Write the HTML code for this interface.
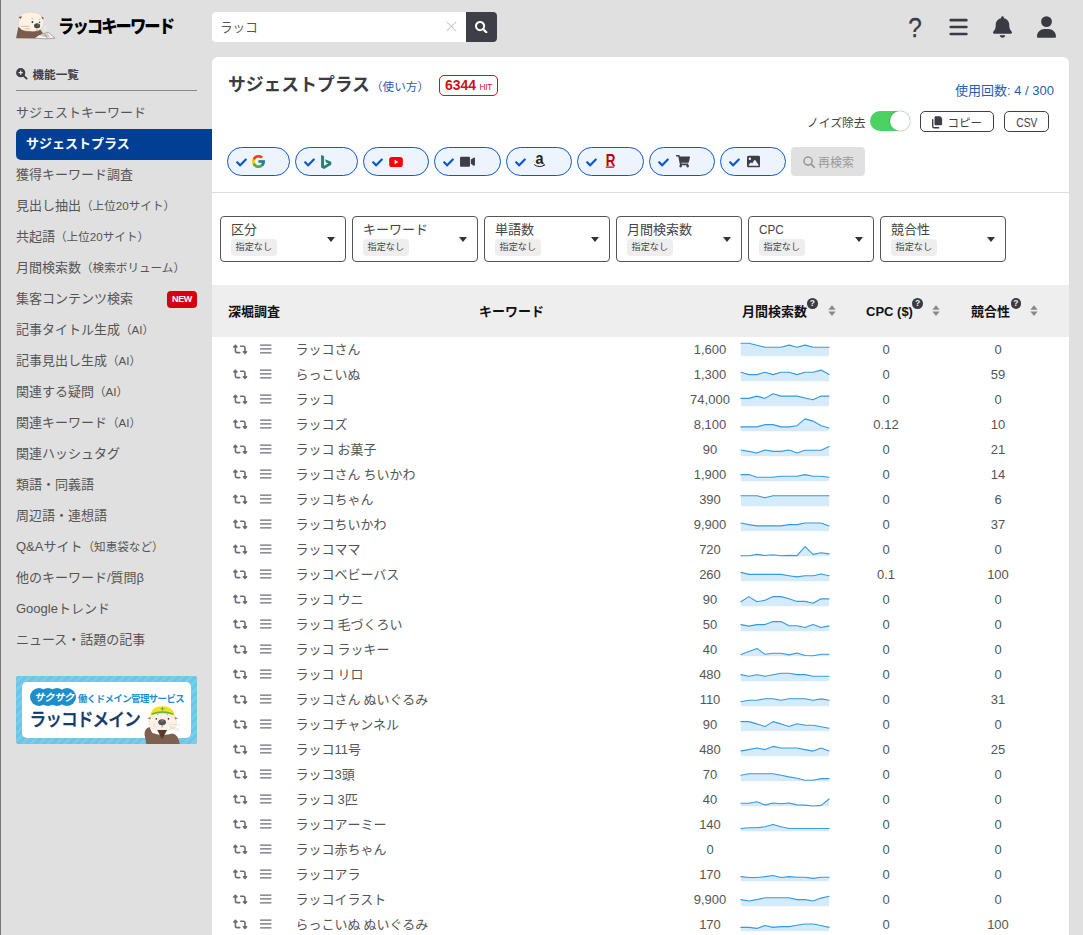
<!DOCTYPE html>
<html lang="ja">
<head>
<meta charset="utf-8">
<title>ラッコキーワード</title>
<style>
*{box-sizing:border-box;}
html,body{margin:0;padding:0;}
body{width:1083px;height:935px;overflow:hidden;background:#e0e0e0;position:relative;
 font-family:"Liberation Sans","Noto Sans CJK JP",sans-serif;font-size:13px;color:#555;}
.lb{position:absolute;left:0;top:0;width:1px;height:935px;background:#777;}
svg{display:block;}
.abs{position:absolute;}
/* header */
.logo-txt{position:absolute;left:58px;top:12px;font-size:16.3px;font-weight:900;color:#000;white-space:nowrap;letter-spacing:-1.9px;line-height:28px;transform-origin:left center;transform:scaleY(1.1);}
.search{position:absolute;left:212px;top:12px;width:285px;height:30px;background:#fff;border-radius:4px;overflow:hidden;}
.search .q{position:absolute;left:8px;top:1.300px;line-height:30px;font-size:12.600px;color:#555;}
.search .x{position:absolute;left:234px;top:9px;}
.search .btn{position:absolute;right:0;top:0;width:31px;height:30px;background:#3e3e47;}
.search .btn svg{position:absolute;left:9px;top:8.700px;}
.hq{left:903px;top:11.700px;width:24px;height:32px;line-height:32px;text-align:center;font-size:27.400px;color:#3a3a42;font-weight:normal;-webkit-text-stroke:.3px #3a3a42;transform:scaleX(.89);}
/* sidebar */
.sb-h{position:absolute;left:16px;top:64px;width:181px;height:27px;border-bottom:1px solid #888;font-size:11.600px;font-weight:bold;color:#3e3e47;line-height:23px;}
.sb-h svg{position:absolute;left:0;top:3.800px;}
.sb-h span{position:absolute;left:16.500px;top:-1.300px;}
.menu{position:absolute;left:16px;top:98px;width:196px;margin:0;padding:0;list-style:none;}
.menu li{height:31px;line-height:30px;font-size:13px;color:#555;white-space:nowrap;position:relative;}
.menu li small{font-size:11.600px;}
.menu li.on{background:#003f94;color:#fff;font-weight:bold;border-radius:5px 0 0 5px;padding-left:10px;}
.new{position:absolute;left:151px;top:7px;width:30px;height:17px;background:#d7000f;border-radius:4px;color:#fff;font-size:9px;font-weight:bold;line-height:17px;text-align:center;letter-spacing:-.3px;}
/* banner */
.bn{position:absolute;left:16px;top:676px;width:181px;height:68px;border-radius:2px;overflow:hidden;
 background:repeating-linear-gradient(135deg,#6cc4e6 0,#6cc4e6 3px,#7ccbe9 3px,#7ccbe9 6px);}
.bn .in{position:absolute;left:6px;top:6px;width:169px;height:56px;background:#fff;border-radius:5px;}
.bn .t1{position:absolute;left:62px;top:17px;font-size:9.400px;font-weight:bold;color:#1b8fd0;letter-spacing:-0.53px;white-space:nowrap;line-height:12px;}
.bn .t2{position:absolute;left:13.500px;top:32.800px;font-size:16.800px;font-weight:500;-webkit-text-stroke:.35px #123a6a;color:#123a6a;white-space:nowrap;line-height:24px;letter-spacing:-1.05px;transform:scaleY(1.1);transform-origin:center;}
.bn .sk{position:absolute;left:15px;top:11px;width:46px;height:19px;}
.bn .sk i{position:absolute;top:.6px;width:18.300px;height:18.300px;border-radius:50%;background:#1e8ec8;}
.bn .sk b{position:absolute;left:3px;top:2.600px;font-size:10.300px;line-height:15px;color:#fff;font-style:italic;font-weight:bold;letter-spacing:-0.35px;white-space:nowrap;}
/* panel */
.panel{position:absolute;left:212px;top:57px;width:857px;height:900px;background:#fff;border-radius:6px 6px 0 0;}
.ttl{position:absolute;left:16px;top:14px;font-size:17.8px;font-weight:bold;color:#3b3b44;line-height:28px;white-space:nowrap;}
.how{position:absolute;left:159px;top:21px;font-size:11.600px;color:#2f5cb0;line-height:18px;white-space:nowrap;}
.hit{position:absolute;left:227px;top:18px;width:59px;height:21px;border:1px solid #d0121b;border-radius:5px;color:#d0121b;text-align:center;line-height:19px;font-size:14px;font-weight:bold;white-space:nowrap;}
.hit small{font-size:8.300px;font-weight:normal;margin-left:3.500px;letter-spacing:-.3px;}
.use{position:absolute;right:15px;top:25px;font-size:13px;color:#2a5db0;line-height:18px;white-space:nowrap;}
.noise{position:absolute;left:595px;top:56.600px;font-size:11.800px;color:#444;line-height:18px;white-space:nowrap;}
.tg{position:absolute;left:658px;top:54px;width:40px;height:20px;border-radius:10px;background:#4cd163;}
.tg i{position:absolute;right:0;top:0;width:20px;height:20px;border-radius:50%;background:#fff;box-shadow:0 0 2px rgba(0,0,0,.35);}
.ob{position:absolute;top:54px;height:21px;border:1px solid #3e3e47;border-radius:5px;font-size:12px;color:#3e3e47;line-height:19px;text-align:center;white-space:nowrap;background:#fff;}
.pill{position:absolute;top:90px;height:29.4px;border:1px solid #0b57d0;border-radius:15px;background:#edf4fe;}
.pill .ck{position:absolute;left:8px;top:8.5px;}
.pill .ico{position:absolute;top:0;height:27.4px;display:flex;align-items:center;}
.re{position:absolute;left:579px;top:90px;width:74px;height:29.4px;border-radius:4px;background:#e0e0e0;color:#999;font-size:12px;line-height:29px;white-space:nowrap;}
.re svg{position:absolute;left:11.600px;top:8.500px;}
.re span{position:absolute;left:27px;top:1.800px;}
.hr{position:absolute;left:0;top:135px;width:857px;height:1px;background:#ddd;}
.dd{position:absolute;top:159px;width:126px;height:46px;border:1px solid #555;border-radius:4px;background:#fff;}
.dd b{position:absolute;left:10px;top:4px;font-weight:normal;font-size:13px;color:#444;line-height:18px;white-space:nowrap;}
.dd em{position:absolute;left:10px;top:22.300px;height:16.400px;padding:0 4.600px;background:#eee;border-radius:4px;font-style:normal;font-size:9.100px;color:#444;line-height:16.400px;white-space:nowrap;}
.dd i{position:absolute;left:106px;top:20px;width:0;height:0;border-left:4px solid transparent;border-right:4px solid transparent;border-top:5px solid #333;}
.th{position:absolute;left:0;top:228px;width:857px;height:52px;background:#eee;font-weight:bold;color:#111;font-size:13px;}
.th span{position:absolute;top:17.5px;line-height:18px;white-space:nowrap;}
.th .qm{position:absolute;top:13.300px;width:10.700px;height:10.700px;border-radius:50%;background:#3b3b44;color:#f2f2f2;font-style:normal;font-weight:bold;font-size:8.500px;line-height:10.900px;text-align:center;}
.th .so{position:absolute;top:20.200px;}
.rows{position:absolute;left:0;top:280px;width:857px;}
.row{position:relative;height:25px;line-height:25px;font-size:13px;color:#555;white-space:nowrap;}
.row span{position:absolute;top:0;}
.row .rt{left:21.200px;top:6px;}
.row .hb{left:48px;top:6.500px;}
.row .kw{left:83.500px;word-spacing:-.7px;}
.row .vol{left:458px;width:80px;text-align:center;}
.row .spk{left:528px;top:5px;}
.row .cpc{left:634px;width:80px;text-align:center;}
.row .cmp{left:746px;width:80px;text-align:center;}
</style>
</head>
<body>
<div class="lb"></div>

<!-- logo -->
<svg class="abs" style="left:0;top:0" width="60" height="45" viewBox="0 0 60 45">
 <path d="M18.300 27 L16.100 38.300 L35 38.600 L43.400 34 L40 29 L26 31z" fill="#7a5c4e"/>
 <path d="M34.600 38.200 L39 34.800 L48.200 32.300 L55 38.200 L46 38.800z" fill="#f7f7f7" stroke="#8a6f62" stroke-width=".6" stroke-linejoin="round"/>
 <path d="M39.500 35.200 L47.500 33.200 L50.500 37.600 L44 37z" fill="#c9c9c9"/>
 <path d="M44.500 34.200 L47.500 38.300" stroke="#8a6f62" stroke-width=".6"/>
 <path d="M18.400 23 Q18.200 12.100 30 12 Q43.800 12 43.700 22.500 Q43.600 31.200 33 31.300 Q29 31.300 24.500 30.600 Q18.600 29.500 18.400 23z" fill="#fdf2e3" stroke="#d9c6b6" stroke-width=".5"/>
 <path d="M18.400 17 L22 16.300 L20.800 19z M44.200 18 L41.200 16.600 L42.300 19.300z" fill="#8a5a3c"/>
 <ellipse cx="37.100" cy="25.700" rx="3.100" ry="2.500" fill="#474747"/>
 <ellipse cx="38" cy="25" rx=".9" ry=".6" fill="#8a8a8a"/>
 <circle cx="32.400" cy="22" r=".9" fill="#333"/><circle cx="39.600" cy="22.200" r=".8" fill="#333"/>
 <path d="M32 18.300l.9.900M39.300 19l.5.700" stroke="#555" stroke-width=".7"/>
 <path d="M21 26.400h8.400M24.800 28.800h5.200" stroke="#c9a79a" stroke-width=".7"/>
 <path d="M43.800 26.300h3M43.800 28.200h3.200M43.600 30h2.600" stroke="#fafafa" stroke-width=".6"/>
 <path d="M37 28.200v2.600" stroke="#8a6f62" stroke-width=".5"/>
 <path d="M28 31 Q34 33.500 38.500 31.500 L41 34.500 L35 37z" fill="#7a5c4e"/>
</svg>
<div class="logo-txt">ラッコキーワード</div>

<div class="search"><span class="q">ラッコ</span>
 <svg class="x" width="11" height="11" viewBox="0 0 11 11"><path d="M.8.800l9.400 9.400M10.200.800L.8 10.200" stroke="#ccc" stroke-width="1.200" fill="none"/></svg>
 <div class="btn"><svg width="12.500" height="12.500" viewBox="0 0 512 512" fill="#fff"><path d="M505 442.700L405.300 343c-4.500-4.500-10.600-7-17-7H372c27.600-35.300 44-79.700 44-128C416 93.100 322.900 0 208 0S0 93.100 0 208s93.100 208 208 208c48.300 0 92.700-16.400 128-44v16.300c0 6.400 2.500 12.500 7 17l99.700 99.700c9.400 9.400 24.600 9.400 33.900 0l28.300-28.300c9.400-9.400 9.400-24.600.1-34zM208 336c-70.700 0-128-57.200-128-128 0-70.700 57.200-128 128-128 70.700 0 128 57.200 128 128 0 70.700-57.200 128-128 128z"/></svg></div>
</div>

<!-- header icons -->
<div class="abs hq">?</div>
<svg class="abs" style="left:949px;top:18px" width="20" height="19" viewBox="0 0 20 19"><path d="M1.750 2.200h15.600M1.750 9h15.600M1.750 16h15.600" stroke="#3a3a42" stroke-width="2.700" stroke-linecap="round"/></svg>
<svg class="abs" style="left:993px;top:16px" width="19" height="22" viewBox="0 0 448 512"><path fill="#3a3a42" d="M224 0c-17.700 0-32 14.300-32 32V51.200C119 66 64 130.600 64 208v18.800c0 47-17.300 92.400-48.500 127.600l-7.400 8.300c-8.400 9.400-10.400 22.900-5.300 34.400S19.400 416 32 416H416c12.600 0 24-7.400 29.200-18.900s3.100-25-5.300-34.400l-7.400-8.300C401.300 319.200 384 273.900 384 226.800V208c0-77.400-55-142-128-156.800V32c0-17.700-14.300-32-32-32zm45.300 493.300c12-12 18.700-28.300 18.700-45.300H224 160c0 17 6.700 33.300 18.700 45.300s28.300 18.700 45.300 18.700s33.300-6.700 45.300-18.700z"/></svg>
<svg class="abs" style="left:1037px;top:16px" width="19" height="22" viewBox="0 0 448 512"><path fill="#3a3a42" d="M224 256A128 128 0 1 0 224 0a128 128 0 1 0 0 256zm-45.700 48C79.800 304 0 383.800 0 482.300C0 498.700 13.300 512 29.700 512H418.300c16.400 0 29.700-13.300 29.700-29.700C448 383.800 368.200 304 269.700 304H178.300z"/></svg>

<!-- sidebar -->
<div class="sb-h"><svg width="12" height="12" viewBox="0 0 12 12"><circle cx="4.700" cy="4.700" r="4.600" fill="#3e3e47"/><path d="M7.800 7.800L10.600 10.600" stroke="#3e3e47" stroke-width="1.900" stroke-linecap="round"/><path d="M2.600 4.700h4.200M4.700 2.600v4.200" stroke="#e6e6e6" stroke-width="1.300"/></svg><span>機能一覧</span></div>
<ul class="menu">
 <li>サジェストキーワード</li>
 <li class="on">サジェストプラス</li>
 <li>獲得キーワード調査</li>
 <li>見出し抽出<small>（上位20サイト）</small></li>
 <li>共起語<small>（上位20サイト）</small></li>
 <li>月間検索数<small>（検索ボリューム）</small></li>
 <li>集客コンテンツ検索<span class="new">NEW</span></li>
 <li>記事タイトル生成<small>（AI）</small></li>
 <li>記事見出し生成<small>（AI）</small></li>
 <li>関連する疑問<small>（AI）</small></li>
 <li>関連キーワード<small>（AI）</small></li>
 <li>関連ハッシュタグ</li>
 <li>類語・同義語</li>
 <li>周辺語・連想語</li>
 <li>Q&amp;Aサイト<small>（知恵袋など）</small></li>
 <li>他のキーワード/質問β</li>
 <li>Googleトレンド</li>
 <li>ニュース・話題の記事</li>
</ul>

<div class="bn"><div class="in"></div>
 <div class="sk"><i style="left:-1px"></i><i style="left:8px"></i><i style="left:17px"></i><i style="left:26.600px"></i><b>サクサク</b></div>
 <div class="t1">働くドメイン管理サービス</div>
 <div class="t2">ラッコドメイン</div>
 <svg class="abs" style="left:127px;top:29px" width="40" height="40" viewBox="0 0 40 40">
  <path d="M3.500 39.500 L1.600 30 Q1 24 6.500 22 Q8 26 9.500 28 Q19 31.500 30 28.500 Q35.500 30 36.800 39.500z" fill="#7d6050"/>
  <path d="M6 13.500 Q6 7.500 19.700 7.500 Q33.300 7.500 33.300 13.500 L33.300 19 Q33 25.200 19.700 25.200 Q6.200 25.200 6 19z" fill="#fdf2e3" stroke="#dccbbd" stroke-width=".4"/>
  <path d="M4.200 13.200 L8 12 L7.300 14.500z M35 13.200 L31.400 12 L32 14.500z" fill="#9a8577"/>
  <path d="M7.500 10.500 Q8 4 14 2 Q19.500 .3 25 2 Q31 4.500 31.300 10.500 Q19.500 6.300 7.500 10.500z" fill="#f6de21"/>
  <path d="M8.600 9.200 Q19.500 4.800 30.200 9.200" fill="none" stroke="#55b548" stroke-width="1.300"/>
  <path d="M17.500 3.800h4M19.500 2.300v3.200" stroke="#3aa54a" stroke-width=".8"/>
  <ellipse cx="19.100" cy="17.200" rx="3.900" ry="3" fill="#555"/>
  <ellipse cx="19.300" cy="16" rx="1.600" ry=".8" fill="#8c8080"/>
  <circle cx="13.300" cy="13.800" r=".85" fill="#333"/><circle cx="25.500" cy="13.800" r=".85" fill="#333"/>
  <path d="M14 9.600h1.200M23.800 9.600h1.200" stroke="#666" stroke-width=".6"/>
  <path d="M19.100 20v2.600" stroke="#555" stroke-width=".6"/>
  <path d="M26.300 19.400h10.600M26.500 21.300l9.500 2.700M27 22.500l10 4" stroke="#c8c8c8" stroke-width=".45"/>
  <path d="M9.700 19.400h2.500M10 21.400h2.500" stroke="#e3c9c4" stroke-width=".5"/>
  <path d="M14.200 24.900 L24.100 24.900 L19.100 34.300z" fill="#573a2c"/>
 </svg>
</div>

<!-- main panel -->
<div class="panel">
 <div class="ttl">サジェストプラス</div>
 <div class="how">（使い方）</div>
 <div class="hit">6344<small>HIT</small></div>
 <div class="use">使用回数: 4 / 300</div>
 <div class="noise">ノイズ除去</div>
 <div class="tg"><i></i></div>
 <div class="ob" style="left:708px;width:74px;"><svg style="position:absolute;left:9.500px;top:3.500px" width="12" height="13" viewBox="0 0 12 13"><path d="M4.900 .3h4.300l1.900 1.900v5.700c0 .8-.6 1.400-1.400 1.400H4.900c-.8 0-1.400-.6-1.400-1.400V1.700c0-.8.600-1.400 1.400-1.400z" fill="#3e3e47"/><path d="M1.700 3.600v6.600c0 .9.700 1.600 1.600 1.600h4.400" fill="none" stroke="#3e3e47" stroke-width="1.400" stroke-linecap="round"/></svg><span style="position:absolute;left:26.400px;top:1.700px;font-size:11.500px">コピー</span></div>
 <div class="ob" style="left:792px;width:45px;font-size:13.500px;"><span style="display:inline-block;transform:scaleX(.76);position:relative;top:.7px">CSV</span></div>

 <div class="pill" style="left:15px;width:63px"><svg class="ck" width="11" height="11" viewBox="0 0 512 512"><path d="M173.898 439.404l-166.400-166.400c-9.997-9.997-9.997-26.206 0-36.204l36.203-36.204c9.997-9.998 26.207-9.998 36.204 0L192 312.690 432.095 72.596c9.997-9.997 26.207-9.997 36.204 0l36.203 36.204c9.997 9.997 9.997 26.206 0 36.204l-294.400 294.401c-9.998 9.997-26.207 9.997-36.204-.001z" fill="#0b57d0"/></svg><span class="ico" style="left:24px"><svg width="13" height="13" viewBox="4 4 40 40"><path fill="#FFC107" d="M43.611,20.083H42V20H24v8h11.303c-1.649,4.657-6.08,8-11.303,8c-6.627,0-12-5.373-12-12c0-6.627,5.373-12,12-12c3.059,0,5.842,1.154,7.961,3.039l5.657-5.657C34.046,6.053,29.268,4,24,4C12.955,4,4,12.955,4,24c0,11.045,8.955,20,20,20c11.045,0,20-8.955,20-20C44,22.659,43.862,21.350,43.611,20.083z"/><path fill="#FF3D00" d="M6.306,14.691l6.571,4.819C14.655,15.108,18.961,12,24,12c3.059,0,5.842,1.154,7.961,3.039l5.657-5.657C34.046,6.053,29.268,4,24,4C16.318,4,9.656,8.337,6.306,14.691z"/><path fill="#4CAF50" d="M24,44c5.166,0,9.860-1.977,13.409-5.192l-6.190-5.238C29.211,35.091,26.715,36,24,36c-5.202,0-9.619-3.317-11.283-7.946l-6.522,5.025C9.505,39.556,16.227,44,24,44z"/><path fill="#1976D2" d="M43.611,20.083H42V20H24v8h11.303c-0.792,2.237-2.231,4.166-4.087,5.571c0.001-0.001,0.002-0.001,0.003-0.002l6.190,5.238C36.971,39.205,44,34,44,24C44,22.659,43.862,21.350,43.611,20.083z"/></svg></span></div>
 <div class="pill" style="left:83px;width:63px"><svg class="ck" width="11" height="11" viewBox="0 0 512 512"><path d="M173.898 439.404l-166.400-166.400c-9.997-9.997-9.997-26.206 0-36.204l36.203-36.204c9.997-9.998 26.207-9.998 36.204 0L192 312.690 432.095 72.596c9.997-9.997 26.207-9.997 36.204 0l36.203 36.204c9.997 9.997 9.997 26.206 0 36.204l-294.400 294.401c-9.998 9.997-26.207 9.997-36.204-.001z" fill="#0b57d0"/></svg><span class="ico" style="left:25px"><svg width="10.500" height="14" viewBox="5 3 14 19"><path fill="#2b7f70" d="M5 3 L9 4.400 V17.600 L14.500 14.400 L11.800 13.100 L10.100 8.900 L18.800 12 V16.400 L9 22 L5 19.800z"/></svg></span></div>
 <div class="pill" style="left:151px;width:66px"><svg class="ck" width="11" height="11" viewBox="0 0 512 512"><path d="M173.898 439.404l-166.400-166.400c-9.997-9.997-9.997-26.206 0-36.204l36.203-36.204c9.997-9.998 26.207-9.998 36.204 0L192 312.690 432.095 72.596c9.997-9.997 26.207-9.997 36.204 0l36.203 36.204c9.997 9.997 9.997 26.206 0 36.204l-294.400 294.401c-9.998 9.997-26.207 9.997-36.204-.001z" fill="#0b57d0"/></svg><span class="ico" style="left:25px"><svg width="14" height="10" viewBox="0 0 15 11"><rect x="0" y="0" width="15" height="11" rx="2.800" fill="#f00"/><path d="M6 3.100L10 5.500L6 7.900z" fill="#fff"/></svg></span></div>
 <div class="pill" style="left:222px;width:67px"><svg class="ck" width="11" height="11" viewBox="0 0 512 512"><path d="M173.898 439.404l-166.400-166.400c-9.997-9.997-9.997-26.206 0-36.204l36.203-36.204c9.997-9.998 26.207-9.998 36.204 0L192 312.690 432.095 72.596c9.997-9.997 26.207-9.997 36.204 0l36.203 36.204c9.997 9.997 9.997 26.206 0 36.204l-294.400 294.401c-9.998 9.997-26.207 9.997-36.204-.001z" fill="#0b57d0"/></svg><span class="ico" style="left:25px"><svg width="15" height="13.300" viewBox="0 0 576 512"><path fill="#3e3e47" d="M336.200 64H47.800C21.400 64 0 85.400 0 111.800v288.400C0 426.600 21.400 448 47.800 448h288.400c26.400 0 47.800-21.400 47.800-47.800V111.800c0-26.400-21.400-47.800-47.800-47.800zm189.400 37.700L416 177.300v157.400l109.600 75.500c21.200 14.600 50.400-.3 50.400-25.800V127.500c0-25.400-29.100-40.400-50.400-25.800z"/></svg></span></div>
 <div class="pill" style="left:294px;width:66px"><svg class="ck" width="11" height="11" viewBox="0 0 512 512"><path d="M173.898 439.404l-166.400-166.400c-9.997-9.997-9.997-26.206 0-36.204l36.203-36.204c9.997-9.998 26.207-9.998 36.204 0L192 312.690 432.095 72.596c9.997-9.997 26.207-9.997 36.204 0l36.203 36.204c9.997 9.997 9.997 26.206 0 36.204l-294.400 294.401c-9.998 9.997-26.207 9.997-36.204-.001z" fill="#0b57d0"/></svg><span class="ico" style="left:27px"><svg width="14" height="16" viewBox="0 0 14 16"><text transform="scale(.9 1)" x="6" y="10.200" text-anchor="middle" font-family="Liberation Sans, sans-serif" font-weight="bold" font-size="16" fill="#222">a</text><path d="M.2 10.600 Q5.300 14.200 10.300 11.200" fill="none" stroke="#222" stroke-width="1"/><path d="M11 10.300l-1.900.2 1.400 1.500z" fill="#222"/></svg></span></div>
 <div class="pill" style="left:365px;width:67px"><svg class="ck" width="11" height="11" viewBox="0 0 512 512"><path d="M173.898 439.404l-166.400-166.400c-9.997-9.997-9.997-26.206 0-36.204l36.203-36.204c9.997-9.998 26.207-9.998 36.204 0L192 312.690 432.095 72.596c9.997-9.997 26.207-9.997 36.204 0l36.203 36.204c9.997 9.997 9.997 26.206 0 36.204l-294.400 294.401c-9.998 9.997-26.207 9.997-36.204-.001z" fill="#0b57d0"/></svg><span class="ico" style="left:27px"><svg width="12" height="16" viewBox="0 0 12 16"><text transform="scale(.85 1)" x="6.500" y="11.600" text-anchor="middle" font-family="Liberation Sans, sans-serif" font-weight="bold" font-size="15.700" fill="#bf0000">R</text><path d="M.8 12.500 H10 L8.600 13.800 H.8z" fill="#bf0000"/></svg></span></div>
 <div class="pill" style="left:437px;width:66px"><svg class="ck" width="11" height="11" viewBox="0 0 512 512"><path d="M173.898 439.404l-166.400-166.400c-9.997-9.997-9.997-26.206 0-36.204l36.203-36.204c9.997-9.998 26.207-9.998 36.204 0L192 312.690 432.095 72.596c9.997-9.997 26.207-9.997 36.204 0l36.203 36.204c9.997 9.997 9.997 26.206 0 36.204l-294.400 294.401c-9.998 9.997-26.207 9.997-36.204-.001z" fill="#0b57d0"/></svg><span class="ico" style="left:25.5px"><svg width="14" height="12.500" viewBox="0 0 576 512"><path fill="#3e3e47" d="M528.120 301.319l47.273-208C578.806 78.301 567.391 64 551.990 64H159.208l-9.166-44.810C147.758 8.021 137.930 0 126.529 0H24C10.745 0 0 10.745 0 24v16c0 13.255 10.745 24 24 24h69.883l70.248 343.435C147.325 417.100 136 435.222 136 456c0 30.928 25.072 56 56 56s56-25.072 56-56c0-15.674-6.447-29.835-16.824-40h209.647C430.447 426.165 424 440.326 424 456c0 30.928 25.072 56 56 56s56-25.072 56-56c0-22.172-12.888-41.332-31.579-50.405l5.517-24.276c3.413-15.018-8.002-29.319-23.403-29.319H218.117l-6.545-32h293.145c11.206 0 20.920-7.754 23.403-18.681z"/></svg></span></div>
 <div class="pill" style="left:508px;width:66px"><svg class="ck" width="11" height="11" viewBox="0 0 512 512"><path d="M173.898 439.404l-166.400-166.400c-9.997-9.997-9.997-26.206 0-36.204l36.203-36.204c9.997-9.998 26.207-9.998 36.204 0L192 312.690 432.095 72.596c9.997-9.997 26.207-9.997 36.204 0l36.203 36.204c9.997 9.997 9.997 26.206 0 36.204l-294.400 294.401c-9.998 9.997-26.207 9.997-36.204-.001z" fill="#0b57d0"/></svg><span class="ico" style="left:25.5px"><svg width="13.200" height="13.200" viewBox="0 0 512 512"><path fill="#3e3e47" d="M0 96C0 60.700 28.700 32 64 32H448c35.300 0 64 28.700 64 64V416c0 35.300-28.700 64-64 64H64c-35.300 0-64-28.700-64-64V96zM323.800 202.500c-4.500-6.600-11.900-10.500-19.800-10.500s-15.400 3.900-19.800 10.500l-87 127.600L170.700 297c-4.600-5.700-11.500-9-18.700-9s-14.200 3.300-18.700 9l-64 80c-5.800 7.200-6.900 17.100-2.900 25.400s12.400 13.600 21.600 13.600h96 32H424c8.900 0 17.100-4.900 21.200-12.800s3.600-17.400-1.400-24.700l-120-176zM112 192a48 48 0 1 0 0-96 48 48 0 1 0 0 96z"/></svg></span></div>

 <div class="re"><svg width="12.400" height="12.400" viewBox="0 0 11 11"><circle cx="4.500" cy="4.500" r="3.600" fill="none" stroke="#999" stroke-width="1.400"/><path d="M7.200 7.200L10.200 10.200" stroke="#999" stroke-width="1.500" stroke-linecap="round"/></svg><span>再検索</span></div>
 <div class="hr"></div>

 <div class="dd" style="left:8px"><b>区分</b><em>指定なし</em><i></i></div>
 <div class="dd" style="left:140px"><b>キーワード</b><em>指定なし</em><i></i></div>
 <div class="dd" style="left:272px"><b>単語数</b><em>指定なし</em><i></i></div>
 <div class="dd" style="left:404px"><b>月間検索数</b><em>指定なし</em><i></i></div>
 <div class="dd" style="left:536px"><b><span style="display:inline-block;transform:scaleX(.9);transform-origin:left center">CPC</span></b><em>指定なし</em><i></i></div>
 <div class="dd" style="left:668px"><b>競合性</b><em>指定なし</em><i></i></div>

 <div class="th">
  <span style="left:16px">深堀調査</span>
  <span style="left:267px">キーワード</span>
  <span style="left:530px">月間検索数</span><i class="qm" style="left:595.100px">?</i><svg class="so" style="left:615.500px" width="8" height="11.400" viewBox="0 0 7.200 10.200" preserveAspectRatio="none"><g fill="#888"><path d="M0.300 4.300L3.600 0.300L6.900 4.300z"/><path d="M0.300 5.900L3.600 9.900L6.900 5.900z"/></g></svg>
  <span style="left:654px">CPC ($)</span><i class="qm" style="left:700.300px">?</i><svg class="so" style="left:720px" width="8" height="11.400" viewBox="0 0 7.200 10.200" preserveAspectRatio="none"><g fill="#888"><path d="M0.300 4.300L3.600 0.300L6.900 4.300z"/><path d="M0.300 5.900L3.600 9.900L6.900 5.900z"/></g></svg>
  <span style="left:759px">競合性</span><i class="qm" style="left:798.500px">?</i><svg class="so" style="left:818px" width="8" height="11.400" viewBox="0 0 7.200 10.200" preserveAspectRatio="none"><g fill="#888"><path d="M0.300 4.300L3.600 0.300L6.900 4.300z"/><path d="M0.300 5.900L3.600 9.900L6.900 5.900z"/></g></svg>
 </div>

 <div class="rows">
<div class="row"><span class="ic rt"><svg width="14.400" height="12.800" viewBox="0 0 576 512"><path d="M272 416c17.700 0 32-14.300 32-32s-14.300-32-32-32H160c-17.700 0-32-14.300-32-32V192h32c12.900 0 24.600-7.800 29.600-19.800s2.200-25.700-6.900-34.900l-64-64c-12.500-12.500-32.800-12.500-45.300 0l-64 64c-9.200 9.200-11.900 22.900-6.900 34.900s16.600 19.800 29.600 19.800l32 0 0 128c0 53 43 96 96 96H272zM304 96c-17.700 0-32 14.300-32 32s14.300 32 32 32l112 0c17.700 0 32 14.300 32 32l0 128H416c-12.900 0-24.600 7.800-29.600 19.800s-2.200 25.700 6.900 34.900l64 64c12.500 12.500 32.800 12.500 45.300 0l64-64c9.200-9.200 11.900-22.900 6.900-34.900s-16.600-19.800-29.600-19.800l-32 0V192c0-53-43-96-96-96L304 96z" fill="#6b6b7b"/></svg></span><span class="ic hb"><svg width="12" height="10" viewBox="0 0 12 10"><g fill="#6b6b7b"><rect x="0" y="0.4" width="11.5" height="1.3" rx=".4"/><rect x="0" y="4.3" width="11.5" height="1.3" rx=".4"/><rect x="0" y="8.2" width="11.5" height="1.3" rx=".4"/></g></svg></span><span class="kw">ラッコさん</span><span class="vol">1,600</span><span class="spk"><svg class="sp" width="90" height="15" viewBox="0 0 90 15"><polygon points="0.9,14.15 0.9,1.2 8.9,1.2 16.9,3.3 25.0,5.3 33.0,5.3 41.0,5.3 49.0,3.1 57.0,5.3 65.0,3.1 73.1,5.3 81.1,5.3 89.1,5.3 89.1,14.15" fill="#d6ebfa"/><polyline points="0.9,1.2 8.9,1.2 16.9,3.3 25.0,5.3 33.0,5.3 41.0,5.3 49.0,3.1 57.0,5.3 65.0,3.1 73.1,5.3 81.1,5.3 89.1,5.3" fill="none" stroke="#3499e6" stroke-width="1.1" stroke-linejoin="round" stroke-linecap="round"/></svg></span><span class="cpc">0</span><span class="cmp">0</span></div>
<div class="row"><span class="ic rt"><svg width="14.400" height="12.800" viewBox="0 0 576 512"><path d="M272 416c17.700 0 32-14.300 32-32s-14.300-32-32-32H160c-17.700 0-32-14.300-32-32V192h32c12.900 0 24.600-7.800 29.600-19.800s2.200-25.700-6.900-34.900l-64-64c-12.500-12.500-32.800-12.500-45.300 0l-64 64c-9.200 9.200-11.900 22.900-6.900 34.900s16.600 19.800 29.600 19.800l32 0 0 128c0 53 43 96 96 96H272zM304 96c-17.700 0-32 14.300-32 32s14.300 32 32 32l112 0c17.700 0 32 14.300 32 32l0 128H416c-12.900 0-24.600 7.800-29.600 19.800s-2.200 25.700 6.900 34.900l64 64c12.500 12.500 32.800 12.500 45.300 0l64-64c9.200-9.200 11.900-22.900 6.900-34.900s-16.600-19.800-29.600-19.800l-32 0V192c0-53-43-96-96-96L304 96z" fill="#6b6b7b"/></svg></span><span class="ic hb"><svg width="12" height="10" viewBox="0 0 12 10"><g fill="#6b6b7b"><rect x="0" y="0.4" width="11.5" height="1.3" rx=".4"/><rect x="0" y="4.3" width="11.5" height="1.3" rx=".4"/><rect x="0" y="8.2" width="11.5" height="1.3" rx=".4"/></g></svg></span><span class="kw">らっこいぬ</span><span class="vol">1,300</span><span class="spk"><svg class="sp" width="90" height="15" viewBox="0 0 90 15"><polygon points="0.9,14.15 0.9,5.2 8.9,7.6 16.9,7.6 25.0,5.2 33.0,7.6 41.0,5.2 49.0,5.2 57.0,7.6 65.0,5.2 73.1,5.2 81.1,3.1 89.1,7.6 89.1,14.15" fill="#d6ebfa"/><polyline points="0.9,5.2 8.9,7.6 16.9,7.6 25.0,5.2 33.0,7.6 41.0,5.2 49.0,5.2 57.0,7.6 65.0,5.2 73.1,5.2 81.1,3.1 89.1,7.6" fill="none" stroke="#3499e6" stroke-width="1.1" stroke-linejoin="round" stroke-linecap="round"/></svg></span><span class="cpc">0</span><span class="cmp">59</span></div>
<div class="row"><span class="ic rt"><svg width="14.400" height="12.800" viewBox="0 0 576 512"><path d="M272 416c17.700 0 32-14.300 32-32s-14.300-32-32-32H160c-17.700 0-32-14.300-32-32V192h32c12.900 0 24.600-7.800 29.600-19.800s2.200-25.700-6.900-34.900l-64-64c-12.500-12.500-32.800-12.500-45.300 0l-64 64c-9.200 9.200-11.900 22.900-6.900 34.900s16.600 19.800 29.600 19.800l32 0 0 128c0 53 43 96 96 96H272zM304 96c-17.700 0-32 14.300-32 32s14.300 32 32 32l112 0c17.700 0 32 14.300 32 32l0 128H416c-12.900 0-24.600 7.800-29.600 19.800s-2.200 25.700 6.900 34.900l64 64c12.500 12.500 32.800 12.500 45.300 0l64-64c9.200-9.200 11.900-22.900 6.900-34.900s-16.600-19.800-29.600-19.800l-32 0V192c0-53-43-96-96-96L304 96z" fill="#6b6b7b"/></svg></span><span class="ic hb"><svg width="12" height="10" viewBox="0 0 12 10"><g fill="#6b6b7b"><rect x="0" y="0.4" width="11.5" height="1.3" rx=".4"/><rect x="0" y="4.3" width="11.5" height="1.3" rx=".4"/><rect x="0" y="8.2" width="11.5" height="1.3" rx=".4"/></g></svg></span><span class="kw">ラッコ</span><span class="vol">74,000</span><span class="spk"><svg class="sp" width="90" height="15" viewBox="0 0 90 15"><polygon points="0.9,14.15 0.9,6.4 8.9,6.4 16.9,4.1 25.0,6.4 33.0,1.7 41.0,4.1 49.0,4.1 57.0,4.1 65.0,6.0 73.1,7.8 81.1,4.1 89.1,4.1 89.1,14.15" fill="#d6ebfa"/><polyline points="0.9,6.4 8.9,6.4 16.9,4.1 25.0,6.4 33.0,1.7 41.0,4.1 49.0,4.1 57.0,4.1 65.0,6.0 73.1,7.8 81.1,4.1 89.1,4.1" fill="none" stroke="#3499e6" stroke-width="1.1" stroke-linejoin="round" stroke-linecap="round"/></svg></span><span class="cpc">0</span><span class="cmp">0</span></div>
<div class="row"><span class="ic rt"><svg width="14.400" height="12.800" viewBox="0 0 576 512"><path d="M272 416c17.700 0 32-14.300 32-32s-14.300-32-32-32H160c-17.700 0-32-14.300-32-32V192h32c12.900 0 24.600-7.800 29.600-19.800s2.200-25.700-6.900-34.900l-64-64c-12.500-12.500-32.800-12.500-45.300 0l-64 64c-9.200 9.200-11.900 22.900-6.900 34.900s16.600 19.800 29.600 19.800l32 0 0 128c0 53 43 96 96 96H272zM304 96c-17.700 0-32 14.300-32 32s14.300 32 32 32l112 0c17.700 0 32 14.300 32 32l0 128H416c-12.900 0-24.600 7.800-29.600 19.800s-2.200 25.700 6.900 34.900l64 64c12.500 12.500 32.800 12.500 45.300 0l64-64c9.200-9.200 11.900-22.900 6.900-34.900s-16.600-19.800-29.600-19.800l-32 0V192c0-53-43-96-96-96L304 96z" fill="#6b6b7b"/></svg></span><span class="ic hb"><svg width="12" height="10" viewBox="0 0 12 10"><g fill="#6b6b7b"><rect x="0" y="0.4" width="11.5" height="1.3" rx=".4"/><rect x="0" y="4.3" width="11.5" height="1.3" rx=".4"/><rect x="0" y="8.2" width="11.5" height="1.3" rx=".4"/></g></svg></span><span class="kw">ラッコズ</span><span class="vol">8,100</span><span class="spk"><svg class="sp" width="90" height="15" viewBox="0 0 90 15"><polygon points="0.9,14.15 0.9,9.9 8.9,9.9 16.9,9.9 25.0,7.6 33.0,7.6 41.0,9.9 49.0,9.9 57.0,8.7 65.0,1.9 73.1,4.1 81.1,8.7 89.1,11.0 89.1,14.15" fill="#d6ebfa"/><polyline points="0.9,9.9 8.9,9.9 16.9,9.9 25.0,7.6 33.0,7.6 41.0,9.9 49.0,9.9 57.0,8.7 65.0,1.9 73.1,4.1 81.1,8.7 89.1,11.0" fill="none" stroke="#3499e6" stroke-width="1.1" stroke-linejoin="round" stroke-linecap="round"/></svg></span><span class="cpc">0.12</span><span class="cmp">10</span></div>
<div class="row"><span class="ic rt"><svg width="14.400" height="12.800" viewBox="0 0 576 512"><path d="M272 416c17.700 0 32-14.300 32-32s-14.300-32-32-32H160c-17.700 0-32-14.300-32-32V192h32c12.900 0 24.600-7.800 29.600-19.800s2.200-25.700-6.900-34.900l-64-64c-12.500-12.500-32.800-12.500-45.300 0l-64 64c-9.200 9.200-11.900 22.900-6.900 34.900s16.600 19.800 29.600 19.800l32 0 0 128c0 53 43 96 96 96H272zM304 96c-17.700 0-32 14.300-32 32s14.300 32 32 32l112 0c17.700 0 32 14.300 32 32l0 128H416c-12.900 0-24.600 7.800-29.600 19.800s-2.200 25.700 6.900 34.900l64 64c12.500 12.500 32.800 12.500 45.300 0l64-64c9.200-9.200 11.900-22.900 6.900-34.900s-16.600-19.800-29.600-19.800l-32 0V192c0-53-43-96-96-96L304 96z" fill="#6b6b7b"/></svg></span><span class="ic hb"><svg width="12" height="10" viewBox="0 0 12 10"><g fill="#6b6b7b"><rect x="0" y="0.4" width="11.5" height="1.3" rx=".4"/><rect x="0" y="4.3" width="11.5" height="1.3" rx=".4"/><rect x="0" y="8.2" width="11.5" height="1.3" rx=".4"/></g></svg></span><span class="kw">ラッコ お菓子</span><span class="vol">90</span><span class="spk"><svg class="sp" width="90" height="15" viewBox="0 0 90 15"><polygon points="0.9,14.15 0.9,8.0 8.9,9.4 16.9,11.0 25.0,8.0 33.0,9.4 41.0,9.4 49.0,8.0 57.0,11.0 65.0,8.3 73.1,8.3 81.1,8.3 89.1,4.6 89.1,14.15" fill="#d6ebfa"/><polyline points="0.9,8.0 8.9,9.4 16.9,11.0 25.0,8.0 33.0,9.4 41.0,9.4 49.0,8.0 57.0,11.0 65.0,8.3 73.1,8.3 81.1,8.3 89.1,4.6" fill="none" stroke="#3499e6" stroke-width="1.1" stroke-linejoin="round" stroke-linecap="round"/></svg></span><span class="cpc">0</span><span class="cmp">21</span></div>
<div class="row"><span class="ic rt"><svg width="14.400" height="12.800" viewBox="0 0 576 512"><path d="M272 416c17.700 0 32-14.300 32-32s-14.300-32-32-32H160c-17.700 0-32-14.300-32-32V192h32c12.900 0 24.600-7.800 29.600-19.800s2.200-25.700-6.900-34.900l-64-64c-12.500-12.500-32.800-12.500-45.300 0l-64 64c-9.200 9.200-11.900 22.900-6.900 34.900s16.600 19.800 29.600 19.800l32 0 0 128c0 53 43 96 96 96H272zM304 96c-17.700 0-32 14.300-32 32s14.300 32 32 32l112 0c17.700 0 32 14.300 32 32l0 128H416c-12.900 0-24.600 7.800-29.600 19.800s-2.200 25.700 6.900 34.900l64 64c12.500 12.500 32.800 12.500 45.300 0l64-64c9.200-9.200 11.900-22.900 6.900-34.900s-16.600-19.800-29.600-19.800l-32 0V192c0-53-43-96-96-96L304 96z" fill="#6b6b7b"/></svg></span><span class="ic hb"><svg width="12" height="10" viewBox="0 0 12 10"><g fill="#6b6b7b"><rect x="0" y="0.4" width="11.5" height="1.3" rx=".4"/><rect x="0" y="4.3" width="11.5" height="1.3" rx=".4"/><rect x="0" y="8.2" width="11.5" height="1.3" rx=".4"/></g></svg></span><span class="kw">ラッコさん ちいかわ</span><span class="vol">1,900</span><span class="spk"><svg class="sp" width="90" height="15" viewBox="0 0 90 15"><polygon points="0.9,14.15 0.9,7.6 8.9,7.6 16.9,10.3 25.0,10.3 33.0,10.3 41.0,9.2 49.0,9.2 57.0,9.2 65.0,7.6 73.1,9.2 81.1,9.2 89.1,10.3 89.1,14.15" fill="#d6ebfa"/><polyline points="0.9,7.6 8.9,7.6 16.9,10.3 25.0,10.3 33.0,10.3 41.0,9.2 49.0,9.2 57.0,9.2 65.0,7.6 73.1,9.2 81.1,9.2 89.1,10.3" fill="none" stroke="#3499e6" stroke-width="1.1" stroke-linejoin="round" stroke-linecap="round"/></svg></span><span class="cpc">0</span><span class="cmp">14</span></div>
<div class="row"><span class="ic rt"><svg width="14.400" height="12.800" viewBox="0 0 576 512"><path d="M272 416c17.700 0 32-14.300 32-32s-14.300-32-32-32H160c-17.700 0-32-14.300-32-32V192h32c12.900 0 24.600-7.800 29.600-19.800s2.200-25.700-6.900-34.900l-64-64c-12.500-12.500-32.800-12.500-45.300 0l-64 64c-9.200 9.200-11.900 22.900-6.900 34.900s16.600 19.800 29.600 19.800l32 0 0 128c0 53 43 96 96 96H272zM304 96c-17.700 0-32 14.300-32 32s14.300 32 32 32l112 0c17.700 0 32 14.300 32 32l0 128H416c-12.900 0-24.600 7.800-29.600 19.800s-2.200 25.700 6.900 34.900l64 64c12.500 12.500 32.800 12.500 45.300 0l64-64c9.200-9.200 11.900-22.900 6.900-34.900s-16.600-19.800-29.600-19.800l-32 0V192c0-53-43-96-96-96L304 96z" fill="#6b6b7b"/></svg></span><span class="ic hb"><svg width="12" height="10" viewBox="0 0 12 10"><g fill="#6b6b7b"><rect x="0" y="0.4" width="11.5" height="1.3" rx=".4"/><rect x="0" y="4.3" width="11.5" height="1.3" rx=".4"/><rect x="0" y="8.2" width="11.5" height="1.3" rx=".4"/></g></svg></span><span class="kw">ラッコちゃん</span><span class="vol">390</span><span class="spk"><svg class="sp" width="90" height="15" viewBox="0 0 90 15"><polygon points="0.9,14.15 0.9,3.7 8.9,3.7 16.9,3.7 25.0,5.8 33.0,3.7 41.0,3.7 49.0,3.7 57.0,3.7 65.0,3.7 73.1,3.7 81.1,3.7 89.1,3.7 89.1,14.15" fill="#d6ebfa"/><polyline points="0.9,3.7 8.9,3.7 16.9,3.7 25.0,5.8 33.0,3.7 41.0,3.7 49.0,3.7 57.0,3.7 65.0,3.7 73.1,3.7 81.1,3.7 89.1,3.7" fill="none" stroke="#3499e6" stroke-width="1.1" stroke-linejoin="round" stroke-linecap="round"/></svg></span><span class="cpc">0</span><span class="cmp">6</span></div>
<div class="row"><span class="ic rt"><svg width="14.400" height="12.800" viewBox="0 0 576 512"><path d="M272 416c17.700 0 32-14.300 32-32s-14.300-32-32-32H160c-17.700 0-32-14.300-32-32V192h32c12.900 0 24.600-7.800 29.600-19.800s2.200-25.700-6.900-34.900l-64-64c-12.500-12.500-32.800-12.500-45.300 0l-64 64c-9.200 9.200-11.900 22.900-6.900 34.900s16.600 19.800 29.600 19.800l32 0 0 128c0 53 43 96 96 96H272zM304 96c-17.700 0-32 14.300-32 32s14.300 32 32 32l112 0c17.700 0 32 14.300 32 32l0 128H416c-12.900 0-24.600 7.800-29.600 19.800s-2.200 25.700 6.900 34.900l64 64c12.500 12.500 32.800 12.500 45.300 0l64-64c9.200-9.200 11.900-22.900 6.900-34.900s-16.600-19.800-29.600-19.800l-32 0V192c0-53-43-96-96-96L304 96z" fill="#6b6b7b"/></svg></span><span class="ic hb"><svg width="12" height="10" viewBox="0 0 12 10"><g fill="#6b6b7b"><rect x="0" y="0.4" width="11.5" height="1.3" rx=".4"/><rect x="0" y="4.3" width="11.5" height="1.3" rx=".4"/><rect x="0" y="8.2" width="11.5" height="1.3" rx=".4"/></g></svg></span><span class="kw">ラッコちいかわ</span><span class="vol">9,900</span><span class="spk"><svg class="sp" width="90" height="15" viewBox="0 0 90 15"><polygon points="0.9,14.15 0.9,6.0 8.9,7.6 16.9,8.9 25.0,8.9 33.0,8.9 41.0,8.9 49.0,7.6 57.0,7.6 65.0,6.0 73.1,6.0 81.1,6.0 89.1,8.9 89.1,14.15" fill="#d6ebfa"/><polyline points="0.9,6.0 8.9,7.6 16.9,8.9 25.0,8.9 33.0,8.9 41.0,8.9 49.0,7.6 57.0,7.6 65.0,6.0 73.1,6.0 81.1,6.0 89.1,8.9" fill="none" stroke="#3499e6" stroke-width="1.1" stroke-linejoin="round" stroke-linecap="round"/></svg></span><span class="cpc">0</span><span class="cmp">37</span></div>
<div class="row"><span class="ic rt"><svg width="14.400" height="12.800" viewBox="0 0 576 512"><path d="M272 416c17.700 0 32-14.300 32-32s-14.300-32-32-32H160c-17.700 0-32-14.300-32-32V192h32c12.900 0 24.600-7.800 29.600-19.800s2.200-25.700-6.900-34.900l-64-64c-12.500-12.500-32.800-12.500-45.300 0l-64 64c-9.200 9.200-11.900 22.900-6.900 34.900s16.600 19.800 29.600 19.800l32 0 0 128c0 53 43 96 96 96H272zM304 96c-17.700 0-32 14.300-32 32s14.300 32 32 32l112 0c17.700 0 32 14.300 32 32l0 128H416c-12.900 0-24.600 7.800-29.600 19.800s-2.200 25.700 6.900 34.900l64 64c12.500 12.500 32.800 12.500 45.300 0l64-64c9.200-9.200 11.900-22.900 6.900-34.900s-16.600-19.800-29.600-19.800l-32 0V192c0-53-43-96-96-96L304 96z" fill="#6b6b7b"/></svg></span><span class="ic hb"><svg width="12" height="10" viewBox="0 0 12 10"><g fill="#6b6b7b"><rect x="0" y="0.4" width="11.5" height="1.3" rx=".4"/><rect x="0" y="4.3" width="11.5" height="1.3" rx=".4"/><rect x="0" y="8.2" width="11.5" height="1.3" rx=".4"/></g></svg></span><span class="kw">ラッコママ</span><span class="vol">720</span><span class="spk"><svg class="sp" width="90" height="15" viewBox="0 0 90 15"><polygon points="0.9,14.15 0.9,13.8 8.9,13.7 16.9,12.4 25.0,13.5 33.0,12.8 41.0,13.8 49.0,13.4 57.0,13.6 65.0,4.6 73.1,12.4 81.1,10.7 89.1,11.9 89.1,14.15" fill="#d6ebfa"/><polyline points="0.9,13.8 8.9,13.7 16.9,12.4 25.0,13.5 33.0,12.8 41.0,13.8 49.0,13.4 57.0,13.6 65.0,4.6 73.1,12.4 81.1,10.7 89.1,11.9" fill="none" stroke="#3499e6" stroke-width="1.1" stroke-linejoin="round" stroke-linecap="round"/></svg></span><span class="cpc">0</span><span class="cmp">0</span></div>
<div class="row"><span class="ic rt"><svg width="14.400" height="12.800" viewBox="0 0 576 512"><path d="M272 416c17.700 0 32-14.300 32-32s-14.300-32-32-32H160c-17.700 0-32-14.300-32-32V192h32c12.900 0 24.600-7.800 29.600-19.800s2.200-25.700-6.900-34.900l-64-64c-12.500-12.500-32.800-12.500-45.300 0l-64 64c-9.200 9.200-11.900 22.900-6.900 34.900s16.600 19.800 29.600 19.800l32 0 0 128c0 53 43 96 96 96H272zM304 96c-17.700 0-32 14.300-32 32s14.300 32 32 32l112 0c17.700 0 32 14.300 32 32l0 128H416c-12.900 0-24.600 7.800-29.600 19.800s-2.200 25.700 6.900 34.900l64 64c12.500 12.500 32.800 12.500 45.300 0l64-64c9.200-9.200 11.900-22.900 6.900-34.900s-16.600-19.800-29.600-19.800l-32 0V192c0-53-43-96-96-96L304 96z" fill="#6b6b7b"/></svg></span><span class="ic hb"><svg width="12" height="10" viewBox="0 0 12 10"><g fill="#6b6b7b"><rect x="0" y="0.4" width="11.5" height="1.3" rx=".4"/><rect x="0" y="4.3" width="11.5" height="1.3" rx=".4"/><rect x="0" y="8.2" width="11.5" height="1.3" rx=".4"/></g></svg></span><span class="kw">ラッコベビーバス</span><span class="vol">260</span><span class="spk"><svg class="sp" width="90" height="15" viewBox="0 0 90 15"><polygon points="0.9,14.15 0.9,5.4 8.9,7.4 16.9,7.4 25.0,7.4 33.0,7.4 41.0,7.4 49.0,8.7 57.0,9.9 65.0,8.7 73.1,8.7 81.1,7.0 89.1,8.7 89.1,14.15" fill="#d6ebfa"/><polyline points="0.9,5.4 8.9,7.4 16.9,7.4 25.0,7.4 33.0,7.4 41.0,7.4 49.0,8.7 57.0,9.9 65.0,8.7 73.1,8.7 81.1,7.0 89.1,8.7" fill="none" stroke="#3499e6" stroke-width="1.1" stroke-linejoin="round" stroke-linecap="round"/></svg></span><span class="cpc">0.1</span><span class="cmp">100</span></div>
<div class="row"><span class="ic rt"><svg width="14.400" height="12.800" viewBox="0 0 576 512"><path d="M272 416c17.700 0 32-14.300 32-32s-14.300-32-32-32H160c-17.700 0-32-14.300-32-32V192h32c12.900 0 24.600-7.800 29.600-19.800s2.200-25.700-6.900-34.900l-64-64c-12.500-12.500-32.800-12.500-45.300 0l-64 64c-9.200 9.200-11.900 22.900-6.900 34.900s16.600 19.800 29.600 19.800l32 0 0 128c0 53 43 96 96 96H272zM304 96c-17.700 0-32 14.300-32 32s14.300 32 32 32l112 0c17.700 0 32 14.300 32 32l0 128H416c-12.900 0-24.600 7.800-29.600 19.800s-2.200 25.700 6.900 34.900l64 64c12.500 12.500 32.800 12.500 45.300 0l64-64c9.200-9.200 11.900-22.900 6.900-34.900s-16.600-19.800-29.600-19.800l-32 0V192c0-53-43-96-96-96L304 96z" fill="#6b6b7b"/></svg></span><span class="ic hb"><svg width="12" height="10" viewBox="0 0 12 10"><g fill="#6b6b7b"><rect x="0" y="0.4" width="11.5" height="1.3" rx=".4"/><rect x="0" y="4.3" width="11.5" height="1.3" rx=".4"/><rect x="0" y="8.2" width="11.5" height="1.3" rx=".4"/></g></svg></span><span class="kw">ラッコ ウニ</span><span class="vol">90</span><span class="spk"><svg class="sp" width="90" height="15" viewBox="0 0 90 15"><polygon points="0.9,14.15 0.9,9.7 8.9,4.6 16.9,9.7 25.0,8.3 33.0,4.6 41.0,4.6 49.0,6.7 57.0,9.4 65.0,9.4 73.1,11.3 81.1,6.7 89.1,6.9 89.1,14.15" fill="#d6ebfa"/><polyline points="0.9,9.7 8.9,4.6 16.9,9.7 25.0,8.3 33.0,4.6 41.0,4.6 49.0,6.7 57.0,9.4 65.0,9.4 73.1,11.3 81.1,6.7 89.1,6.9" fill="none" stroke="#3499e6" stroke-width="1.1" stroke-linejoin="round" stroke-linecap="round"/></svg></span><span class="cpc">0</span><span class="cmp">0</span></div>
<div class="row"><span class="ic rt"><svg width="14.400" height="12.800" viewBox="0 0 576 512"><path d="M272 416c17.700 0 32-14.300 32-32s-14.300-32-32-32H160c-17.700 0-32-14.300-32-32V192h32c12.900 0 24.600-7.800 29.600-19.800s2.200-25.700-6.900-34.900l-64-64c-12.500-12.500-32.800-12.500-45.300 0l-64 64c-9.200 9.200-11.900 22.900-6.900 34.900s16.600 19.800 29.600 19.800l32 0 0 128c0 53 43 96 96 96H272zM304 96c-17.700 0-32 14.300-32 32s14.300 32 32 32l112 0c17.700 0 32 14.300 32 32l0 128H416c-12.900 0-24.600 7.800-29.600 19.800s-2.200 25.700 6.900 34.900l64 64c12.500 12.500 32.800 12.500 45.300 0l64-64c9.200-9.200 11.900-22.900 6.900-34.900s-16.600-19.800-29.600-19.800l-32 0V192c0-53-43-96-96-96L304 96z" fill="#6b6b7b"/></svg></span><span class="ic hb"><svg width="12" height="10" viewBox="0 0 12 10"><g fill="#6b6b7b"><rect x="0" y="0.4" width="11.5" height="1.3" rx=".4"/><rect x="0" y="4.3" width="11.5" height="1.3" rx=".4"/><rect x="0" y="8.2" width="11.5" height="1.3" rx=".4"/></g></svg></span><span class="kw">ラッコ 毛づくろい</span><span class="vol">50</span><span class="spk"><svg class="sp" width="90" height="15" viewBox="0 0 90 15"><polygon points="0.9,14.15 0.9,7.6 8.9,9.1 16.9,7.6 25.0,7.6 33.0,4.6 41.0,4.6 49.0,8.7 57.0,8.7 65.0,10.5 73.1,7.6 81.1,10.5 89.1,8.9 89.1,14.15" fill="#d6ebfa"/><polyline points="0.9,7.6 8.9,9.1 16.9,7.6 25.0,7.6 33.0,4.6 41.0,4.6 49.0,8.7 57.0,8.7 65.0,10.5 73.1,7.6 81.1,10.5 89.1,8.9" fill="none" stroke="#3499e6" stroke-width="1.1" stroke-linejoin="round" stroke-linecap="round"/></svg></span><span class="cpc">0</span><span class="cmp">0</span></div>
<div class="row"><span class="ic rt"><svg width="14.400" height="12.800" viewBox="0 0 576 512"><path d="M272 416c17.700 0 32-14.300 32-32s-14.300-32-32-32H160c-17.700 0-32-14.300-32-32V192h32c12.900 0 24.600-7.800 29.600-19.800s2.200-25.700-6.900-34.900l-64-64c-12.500-12.500-32.800-12.500-45.300 0l-64 64c-9.200 9.200-11.900 22.900-6.900 34.900s16.600 19.800 29.600 19.800l32 0 0 128c0 53 43 96 96 96H272zM304 96c-17.700 0-32 14.300-32 32s14.300 32 32 32l112 0c17.700 0 32 14.300 32 32l0 128H416c-12.900 0-24.600 7.800-29.600 19.800s-2.200 25.700 6.900 34.900l64 64c12.500 12.500 32.800 12.500 45.300 0l64-64c9.200-9.200 11.900-22.900 6.900-34.900s-16.600-19.800-29.600-19.800l-32 0V192c0-53-43-96-96-96L304 96z" fill="#6b6b7b"/></svg></span><span class="ic hb"><svg width="12" height="10" viewBox="0 0 12 10"><g fill="#6b6b7b"><rect x="0" y="0.4" width="11.5" height="1.3" rx=".4"/><rect x="0" y="4.3" width="11.5" height="1.3" rx=".4"/><rect x="0" y="8.2" width="11.5" height="1.3" rx=".4"/></g></svg></span><span class="kw">ラッコ ラッキー</span><span class="vol">40</span><span class="spk"><svg class="sp" width="90" height="15" viewBox="0 0 90 15"><polygon points="0.9,14.15 0.9,12.4 8.9,9.4 16.9,6.4 25.0,12.3 33.0,11.3 41.0,11.3 49.0,12.9 57.0,11.0 65.0,13.5 73.1,13.7 81.1,12.3 89.1,12.3 89.1,14.15" fill="#d6ebfa"/><polyline points="0.9,12.4 8.9,9.4 16.9,6.4 25.0,12.3 33.0,11.3 41.0,11.3 49.0,12.9 57.0,11.0 65.0,13.5 73.1,13.7 81.1,12.3 89.1,12.3" fill="none" stroke="#3499e6" stroke-width="1.1" stroke-linejoin="round" stroke-linecap="round"/></svg></span><span class="cpc">0</span><span class="cmp">0</span></div>
<div class="row"><span class="ic rt"><svg width="14.400" height="12.800" viewBox="0 0 576 512"><path d="M272 416c17.700 0 32-14.300 32-32s-14.300-32-32-32H160c-17.700 0-32-14.300-32-32V192h32c12.900 0 24.600-7.800 29.600-19.800s2.200-25.700-6.900-34.900l-64-64c-12.500-12.500-32.800-12.500-45.300 0l-64 64c-9.200 9.200-11.900 22.900-6.900 34.900s16.600 19.800 29.600 19.800l32 0 0 128c0 53 43 96 96 96H272zM304 96c-17.700 0-32 14.300-32 32s14.300 32 32 32l112 0c17.700 0 32 14.300 32 32l0 128H416c-12.900 0-24.600 7.800-29.600 19.800s-2.200 25.700 6.900 34.900l64 64c12.500 12.500 32.800 12.500 45.300 0l64-64c9.200-9.200 11.900-22.900 6.900-34.900s-16.600-19.800-29.600-19.800l-32 0V192c0-53-43-96-96-96L304 96z" fill="#6b6b7b"/></svg></span><span class="ic hb"><svg width="12" height="10" viewBox="0 0 12 10"><g fill="#6b6b7b"><rect x="0" y="0.4" width="11.5" height="1.3" rx=".4"/><rect x="0" y="4.3" width="11.5" height="1.3" rx=".4"/><rect x="0" y="8.2" width="11.5" height="1.3" rx=".4"/></g></svg></span><span class="kw">ラッコ リロ</span><span class="vol">480</span><span class="spk"><svg class="sp" width="90" height="15" viewBox="0 0 90 15"><polygon points="0.9,14.15 0.9,7.6 8.9,9.2 16.9,7.8 25.0,9.2 33.0,7.8 41.0,6.3 49.0,6.3 57.0,7.6 65.0,7.6 73.1,9.2 81.1,9.2 89.1,9.2 89.1,14.15" fill="#d6ebfa"/><polyline points="0.9,7.6 8.9,9.2 16.9,7.8 25.0,9.2 33.0,7.8 41.0,6.3 49.0,6.3 57.0,7.6 65.0,7.6 73.1,9.2 81.1,9.2 89.1,9.2" fill="none" stroke="#3499e6" stroke-width="1.1" stroke-linejoin="round" stroke-linecap="round"/></svg></span><span class="cpc">0</span><span class="cmp">0</span></div>
<div class="row"><span class="ic rt"><svg width="14.400" height="12.800" viewBox="0 0 576 512"><path d="M272 416c17.700 0 32-14.300 32-32s-14.300-32-32-32H160c-17.700 0-32-14.300-32-32V192h32c12.900 0 24.600-7.800 29.600-19.800s2.200-25.700-6.900-34.900l-64-64c-12.500-12.500-32.800-12.500-45.300 0l-64 64c-9.200 9.200-11.900 22.900-6.900 34.900s16.600 19.800 29.600 19.800l32 0 0 128c0 53 43 96 96 96H272zM304 96c-17.700 0-32 14.300-32 32s14.300 32 32 32l112 0c17.700 0 32 14.300 32 32l0 128H416c-12.900 0-24.600 7.800-29.600 19.800s-2.200 25.700 6.900 34.900l64 64c12.500 12.500 32.800 12.500 45.300 0l64-64c9.200-9.200 11.900-22.900 6.900-34.900s-16.600-19.800-29.600-19.800l-32 0V192c0-53-43-96-96-96L304 96z" fill="#6b6b7b"/></svg></span><span class="ic hb"><svg width="12" height="10" viewBox="0 0 12 10"><g fill="#6b6b7b"><rect x="0" y="0.4" width="11.5" height="1.3" rx=".4"/><rect x="0" y="4.3" width="11.5" height="1.3" rx=".4"/><rect x="0" y="8.2" width="11.5" height="1.3" rx=".4"/></g></svg></span><span class="kw">ラッコさん ぬいぐるみ</span><span class="vol">110</span><span class="spk"><svg class="sp" width="90" height="15" viewBox="0 0 90 15"><polygon points="0.9,14.15 0.9,9.7 8.9,8.3 16.9,8.3 25.0,6.7 33.0,6.7 41.0,8.3 49.0,6.7 57.0,6.7 65.0,6.7 73.1,8.3 81.1,6.9 89.1,8.3 89.1,14.15" fill="#d6ebfa"/><polyline points="0.9,9.7 8.9,8.3 16.9,8.3 25.0,6.7 33.0,6.7 41.0,8.3 49.0,6.7 57.0,6.7 65.0,6.7 73.1,8.3 81.1,6.9 89.1,8.3" fill="none" stroke="#3499e6" stroke-width="1.1" stroke-linejoin="round" stroke-linecap="round"/></svg></span><span class="cpc">0</span><span class="cmp">31</span></div>
<div class="row"><span class="ic rt"><svg width="14.400" height="12.800" viewBox="0 0 576 512"><path d="M272 416c17.700 0 32-14.300 32-32s-14.300-32-32-32H160c-17.700 0-32-14.300-32-32V192h32c12.900 0 24.600-7.800 29.600-19.800s2.200-25.700-6.900-34.900l-64-64c-12.500-12.500-32.800-12.500-45.300 0l-64 64c-9.200 9.200-11.900 22.900-6.900 34.900s16.600 19.800 29.600 19.800l32 0 0 128c0 53 43 96 96 96H272zM304 96c-17.700 0-32 14.300-32 32s14.300 32 32 32l112 0c17.700 0 32 14.300 32 32l0 128H416c-12.900 0-24.600 7.800-29.600 19.800s-2.200 25.700 6.900 34.900l64 64c12.500 12.500 32.800 12.500 45.300 0l64-64c9.200-9.200 11.900-22.900 6.900-34.900s-16.600-19.800-29.600-19.800l-32 0V192c0-53-43-96-96-96L304 96z" fill="#6b6b7b"/></svg></span><span class="ic hb"><svg width="12" height="10" viewBox="0 0 12 10"><g fill="#6b6b7b"><rect x="0" y="0.4" width="11.5" height="1.3" rx=".4"/><rect x="0" y="4.3" width="11.5" height="1.3" rx=".4"/><rect x="0" y="8.2" width="11.5" height="1.3" rx=".4"/></g></svg></span><span class="kw">ラッコチャンネル</span><span class="vol">90</span><span class="spk"><svg class="sp" width="90" height="15" viewBox="0 0 90 15"><polygon points="0.9,14.15 0.9,4.6 8.9,4.6 16.9,6.9 25.0,9.6 33.0,4.6 41.0,6.9 49.0,9.6 57.0,6.7 65.0,8.3 73.1,8.3 81.1,9.7 89.1,11.2 89.1,14.15" fill="#d6ebfa"/><polyline points="0.9,4.6 8.9,4.6 16.9,6.9 25.0,9.6 33.0,4.6 41.0,6.9 49.0,9.6 57.0,6.7 65.0,8.3 73.1,8.3 81.1,9.7 89.1,11.2" fill="none" stroke="#3499e6" stroke-width="1.1" stroke-linejoin="round" stroke-linecap="round"/></svg></span><span class="cpc">0</span><span class="cmp">0</span></div>
<div class="row"><span class="ic rt"><svg width="14.400" height="12.800" viewBox="0 0 576 512"><path d="M272 416c17.700 0 32-14.300 32-32s-14.300-32-32-32H160c-17.700 0-32-14.300-32-32V192h32c12.900 0 24.600-7.800 29.600-19.800s2.200-25.700-6.900-34.900l-64-64c-12.500-12.500-32.800-12.500-45.300 0l-64 64c-9.200 9.200-11.900 22.900-6.900 34.900s16.600 19.800 29.600 19.800l32 0 0 128c0 53 43 96 96 96H272zM304 96c-17.700 0-32 14.300-32 32s14.300 32 32 32l112 0c17.700 0 32 14.300 32 32l0 128H416c-12.900 0-24.600 7.800-29.600 19.800s-2.200 25.700 6.900 34.900l64 64c12.500 12.500 32.800 12.500 45.300 0l64-64c9.200-9.200 11.900-22.900 6.900-34.900s-16.600-19.800-29.600-19.800l-32 0V192c0-53-43-96-96-96L304 96z" fill="#6b6b7b"/></svg></span><span class="ic hb"><svg width="12" height="10" viewBox="0 0 12 10"><g fill="#6b6b7b"><rect x="0" y="0.4" width="11.5" height="1.3" rx=".4"/><rect x="0" y="4.3" width="11.5" height="1.3" rx=".4"/><rect x="0" y="8.2" width="11.5" height="1.3" rx=".4"/></g></svg></span><span class="kw">ラッコ11号</span><span class="vol">480</span><span class="spk"><svg class="sp" width="90" height="15" viewBox="0 0 90 15"><polygon points="0.9,14.15 0.9,8.9 8.9,7.6 16.9,6.0 25.0,7.6 33.0,4.4 41.0,6.0 49.0,6.0 57.0,6.0 65.0,7.6 73.1,9.1 81.1,6.0 89.1,8.9 89.1,14.15" fill="#d6ebfa"/><polyline points="0.9,8.9 8.9,7.6 16.9,6.0 25.0,7.6 33.0,4.4 41.0,6.0 49.0,6.0 57.0,6.0 65.0,7.6 73.1,9.1 81.1,6.0 89.1,8.9" fill="none" stroke="#3499e6" stroke-width="1.1" stroke-linejoin="round" stroke-linecap="round"/></svg></span><span class="cpc">0</span><span class="cmp">25</span></div>
<div class="row"><span class="ic rt"><svg width="14.400" height="12.800" viewBox="0 0 576 512"><path d="M272 416c17.700 0 32-14.300 32-32s-14.300-32-32-32H160c-17.700 0-32-14.300-32-32V192h32c12.900 0 24.600-7.800 29.600-19.800s2.200-25.700-6.900-34.900l-64-64c-12.500-12.500-32.800-12.500-45.300 0l-64 64c-9.200 9.200-11.900 22.900-6.900 34.900s16.600 19.800 29.600 19.800l32 0 0 128c0 53 43 96 96 96H272zM304 96c-17.700 0-32 14.300-32 32s14.300 32 32 32l112 0c17.700 0 32 14.300 32 32l0 128H416c-12.900 0-24.600 7.800-29.600 19.800s-2.200 25.700 6.900 34.900l64 64c12.500 12.500 32.800 12.500 45.300 0l64-64c9.200-9.200 11.900-22.900 6.900-34.900s-16.600-19.800-29.600-19.800l-32 0V192c0-53-43-96-96-96L304 96z" fill="#6b6b7b"/></svg></span><span class="ic hb"><svg width="12" height="10" viewBox="0 0 12 10"><g fill="#6b6b7b"><rect x="0" y="0.4" width="11.5" height="1.3" rx=".4"/><rect x="0" y="4.3" width="11.5" height="1.3" rx=".4"/><rect x="0" y="8.2" width="11.5" height="1.3" rx=".4"/></g></svg></span><span class="kw">ラッコ3頭</span><span class="vol">70</span><span class="spk"><svg class="sp" width="90" height="15" viewBox="0 0 90 15"><polygon points="0.9,14.15 0.9,8.3 8.9,6.8 16.9,6.8 25.0,6.8 33.0,6.8 41.0,8.3 49.0,9.9 57.0,11.3 65.0,13.3 73.1,13.3 81.1,11.6 89.1,11.6 89.1,14.15" fill="#d6ebfa"/><polyline points="0.9,8.3 8.9,6.8 16.9,6.8 25.0,6.8 33.0,6.8 41.0,8.3 49.0,9.9 57.0,11.3 65.0,13.3 73.1,13.3 81.1,11.6 89.1,11.6" fill="none" stroke="#3499e6" stroke-width="1.1" stroke-linejoin="round" stroke-linecap="round"/></svg></span><span class="cpc">0</span><span class="cmp">0</span></div>
<div class="row"><span class="ic rt"><svg width="14.400" height="12.800" viewBox="0 0 576 512"><path d="M272 416c17.700 0 32-14.300 32-32s-14.300-32-32-32H160c-17.700 0-32-14.300-32-32V192h32c12.900 0 24.600-7.800 29.600-19.800s2.200-25.700-6.900-34.900l-64-64c-12.500-12.500-32.800-12.500-45.300 0l-64 64c-9.200 9.200-11.900 22.900-6.900 34.900s16.600 19.800 29.600 19.800l32 0 0 128c0 53 43 96 96 96H272zM304 96c-17.700 0-32 14.300-32 32s14.300 32 32 32l112 0c17.700 0 32 14.300 32 32l0 128H416c-12.900 0-24.600 7.800-29.600 19.800s-2.200 25.700 6.900 34.900l64 64c12.500 12.500 32.800 12.500 45.300 0l64-64c9.200-9.200 11.900-22.900 6.900-34.900s-16.600-19.800-29.600-19.800l-32 0V192c0-53-43-96-96-96L304 96z" fill="#6b6b7b"/></svg></span><span class="ic hb"><svg width="12" height="10" viewBox="0 0 12 10"><g fill="#6b6b7b"><rect x="0" y="0.4" width="11.5" height="1.3" rx=".4"/><rect x="0" y="4.3" width="11.5" height="1.3" rx=".4"/><rect x="0" y="8.2" width="11.5" height="1.3" rx=".4"/></g></svg></span><span class="kw">ラッコ 3匹</span><span class="vol">40</span><span class="spk"><svg class="sp" width="90" height="15" viewBox="0 0 90 15"><polygon points="0.9,14.15 0.9,11.3 8.9,11.3 16.9,9.7 25.0,13.1 33.0,11.0 41.0,11.8 49.0,11.0 57.0,12.9 65.0,13.1 73.1,14.0 81.1,13.4 89.1,7.0 89.1,14.15" fill="#d6ebfa"/><polyline points="0.9,11.3 8.9,11.3 16.9,9.7 25.0,13.1 33.0,11.0 41.0,11.8 49.0,11.0 57.0,12.9 65.0,13.1 73.1,14.0 81.1,13.4 89.1,7.0" fill="none" stroke="#3499e6" stroke-width="1.1" stroke-linejoin="round" stroke-linecap="round"/></svg></span><span class="cpc">0</span><span class="cmp">0</span></div>
<div class="row"><span class="ic rt"><svg width="14.400" height="12.800" viewBox="0 0 576 512"><path d="M272 416c17.700 0 32-14.300 32-32s-14.300-32-32-32H160c-17.700 0-32-14.300-32-32V192h32c12.900 0 24.600-7.800 29.600-19.800s2.200-25.700-6.900-34.900l-64-64c-12.500-12.500-32.800-12.500-45.300 0l-64 64c-9.200 9.200-11.900 22.900-6.900 34.900s16.600 19.800 29.600 19.800l32 0 0 128c0 53 43 96 96 96H272zM304 96c-17.700 0-32 14.300-32 32s14.300 32 32 32l112 0c17.700 0 32 14.300 32 32l0 128H416c-12.900 0-24.600 7.800-29.600 19.800s-2.200 25.700 6.900 34.900l64 64c12.500 12.500 32.800 12.500 45.300 0l64-64c9.200-9.200 11.900-22.900 6.900-34.900s-16.600-19.800-29.600-19.800l-32 0V192c0-53-43-96-96-96L304 96z" fill="#6b6b7b"/></svg></span><span class="ic hb"><svg width="12" height="10" viewBox="0 0 12 10"><g fill="#6b6b7b"><rect x="0" y="0.4" width="11.5" height="1.3" rx=".4"/><rect x="0" y="4.3" width="11.5" height="1.3" rx=".4"/><rect x="0" y="8.2" width="11.5" height="1.3" rx=".4"/></g></svg></span><span class="kw">ラッコアーミー</span><span class="vol">140</span><span class="spk"><svg class="sp" width="90" height="15" viewBox="0 0 90 15"><polygon points="0.9,14.15 0.9,11.5 8.9,10.7 16.9,10.7 25.0,9.7 33.0,7.5 41.0,9.7 49.0,11.5 57.0,11.5 65.0,11.5 73.1,11.5 81.1,11.5 89.1,11.5 89.1,14.15" fill="#d6ebfa"/><polyline points="0.9,11.5 8.9,10.7 16.9,10.7 25.0,9.7 33.0,7.5 41.0,9.7 49.0,11.5 57.0,11.5 65.0,11.5 73.1,11.5 81.1,11.5 89.1,11.5" fill="none" stroke="#3499e6" stroke-width="1.1" stroke-linejoin="round" stroke-linecap="round"/></svg></span><span class="cpc">0</span><span class="cmp">0</span></div>
<div class="row"><span class="ic rt"><svg width="14.400" height="12.800" viewBox="0 0 576 512"><path d="M272 416c17.700 0 32-14.300 32-32s-14.300-32-32-32H160c-17.700 0-32-14.300-32-32V192h32c12.900 0 24.600-7.800 29.600-19.800s2.200-25.700-6.900-34.900l-64-64c-12.500-12.500-32.800-12.500-45.300 0l-64 64c-9.200 9.200-11.900 22.900-6.900 34.900s16.600 19.800 29.600 19.800l32 0 0 128c0 53 43 96 96 96H272zM304 96c-17.700 0-32 14.300-32 32s14.300 32 32 32l112 0c17.700 0 32 14.300 32 32l0 128H416c-12.900 0-24.600 7.800-29.600 19.800s-2.200 25.700 6.900 34.900l64 64c12.500 12.500 32.800 12.500 45.300 0l64-64c9.200-9.200 11.900-22.900 6.900-34.900s-16.600-19.800-29.600-19.800l-32 0V192c0-53-43-96-96-96L304 96z" fill="#6b6b7b"/></svg></span><span class="ic hb"><svg width="12" height="10" viewBox="0 0 12 10"><g fill="#6b6b7b"><rect x="0" y="0.4" width="11.5" height="1.3" rx=".4"/><rect x="0" y="4.3" width="11.5" height="1.3" rx=".4"/><rect x="0" y="8.2" width="11.5" height="1.3" rx=".4"/></g></svg></span><span class="kw">ラッコ赤ちゃん</span><span class="vol">0</span><span class="spk"></span><span class="cpc">0</span><span class="cmp">0</span></div>
<div class="row"><span class="ic rt"><svg width="14.400" height="12.800" viewBox="0 0 576 512"><path d="M272 416c17.700 0 32-14.300 32-32s-14.300-32-32-32H160c-17.700 0-32-14.300-32-32V192h32c12.900 0 24.600-7.800 29.600-19.800s2.200-25.700-6.900-34.900l-64-64c-12.500-12.500-32.800-12.500-45.300 0l-64 64c-9.200 9.200-11.900 22.900-6.900 34.900s16.600 19.800 29.600 19.800l32 0 0 128c0 53 43 96 96 96H272zM304 96c-17.700 0-32 14.300-32 32s14.300 32 32 32l112 0c17.700 0 32 14.300 32 32l0 128H416c-12.900 0-24.600 7.800-29.600 19.800s-2.200 25.700 6.900 34.900l64 64c12.500 12.500 32.800 12.500 45.300 0l64-64c9.200-9.200 11.900-22.900 6.900-34.900s-16.600-19.800-29.600-19.800l-32 0V192c0-53-43-96-96-96L304 96z" fill="#6b6b7b"/></svg></span><span class="ic hb"><svg width="12" height="10" viewBox="0 0 12 10"><g fill="#6b6b7b"><rect x="0" y="0.4" width="11.5" height="1.3" rx=".4"/><rect x="0" y="4.3" width="11.5" height="1.3" rx=".4"/><rect x="0" y="8.2" width="11.5" height="1.3" rx=".4"/></g></svg></span><span class="kw">ラッコアラ</span><span class="vol">170</span><span class="spk"><svg class="sp" width="90" height="15" viewBox="0 0 90 15"><polygon points="0.9,14.15 0.9,9.6 8.9,10.5 16.9,10.5 25.0,9.6 33.0,8.5 41.0,10.5 49.0,9.6 57.0,10.3 65.0,10.3 73.1,11.4 81.1,10.3 89.1,10.3 89.1,14.15" fill="#d6ebfa"/><polyline points="0.9,9.6 8.9,10.5 16.9,10.5 25.0,9.6 33.0,8.5 41.0,10.5 49.0,9.6 57.0,10.3 65.0,10.3 73.1,11.4 81.1,10.3 89.1,10.3" fill="none" stroke="#3499e6" stroke-width="1.1" stroke-linejoin="round" stroke-linecap="round"/></svg></span><span class="cpc">0</span><span class="cmp">0</span></div>
<div class="row"><span class="ic rt"><svg width="14.400" height="12.800" viewBox="0 0 576 512"><path d="M272 416c17.700 0 32-14.300 32-32s-14.300-32-32-32H160c-17.700 0-32-14.300-32-32V192h32c12.900 0 24.600-7.800 29.600-19.800s2.200-25.700-6.900-34.900l-64-64c-12.500-12.500-32.800-12.500-45.300 0l-64 64c-9.200 9.200-11.900 22.900-6.900 34.900s16.600 19.800 29.600 19.800l32 0 0 128c0 53 43 96 96 96H272zM304 96c-17.700 0-32 14.300-32 32s14.300 32 32 32l112 0c17.700 0 32 14.300 32 32l0 128H416c-12.900 0-24.600 7.800-29.600 19.800s-2.200 25.700 6.900 34.900l64 64c12.500 12.500 32.800 12.500 45.300 0l64-64c9.200-9.200 11.900-22.900 6.900-34.900s-16.600-19.800-29.600-19.800l-32 0V192c0-53-43-96-96-96L304 96z" fill="#6b6b7b"/></svg></span><span class="ic hb"><svg width="12" height="10" viewBox="0 0 12 10"><g fill="#6b6b7b"><rect x="0" y="0.4" width="11.5" height="1.3" rx=".4"/><rect x="0" y="4.3" width="11.5" height="1.3" rx=".4"/><rect x="0" y="8.2" width="11.5" height="1.3" rx=".4"/></g></svg></span><span class="kw">ラッコイラスト</span><span class="vol">9,900</span><span class="spk"><svg class="sp" width="90" height="15" viewBox="0 0 90 15"><polygon points="0.9,14.15 0.9,7.6 8.9,9.0 16.9,7.6 25.0,5.8 33.0,5.8 41.0,5.8 49.0,5.8 57.0,7.6 65.0,7.6 73.1,9.0 81.1,6.1 89.1,4.3 89.1,14.15" fill="#d6ebfa"/><polyline points="0.9,7.6 8.9,9.0 16.9,7.6 25.0,5.8 33.0,5.8 41.0,5.8 49.0,5.8 57.0,7.6 65.0,7.6 73.1,9.0 81.1,6.1 89.1,4.3" fill="none" stroke="#3499e6" stroke-width="1.1" stroke-linejoin="round" stroke-linecap="round"/></svg></span><span class="cpc">0</span><span class="cmp">0</span></div>
<div class="row"><span class="ic rt"><svg width="14.400" height="12.800" viewBox="0 0 576 512"><path d="M272 416c17.700 0 32-14.300 32-32s-14.300-32-32-32H160c-17.700 0-32-14.300-32-32V192h32c12.900 0 24.600-7.800 29.600-19.800s2.200-25.700-6.900-34.900l-64-64c-12.500-12.500-32.800-12.500-45.300 0l-64 64c-9.200 9.200-11.900 22.900-6.900 34.900s16.600 19.800 29.600 19.800l32 0 0 128c0 53 43 96 96 96H272zM304 96c-17.700 0-32 14.300-32 32s14.300 32 32 32l112 0c17.700 0 32 14.300 32 32l0 128H416c-12.900 0-24.600 7.800-29.600 19.800s-2.200 25.700 6.900 34.900l64 64c12.500 12.500 32.800 12.500 45.300 0l64-64c9.200-9.200 11.900-22.900 6.900-34.900s-16.600-19.800-29.600-19.800l-32 0V192c0-53-43-96-96-96L304 96z" fill="#6b6b7b"/></svg></span><span class="ic hb"><svg width="12" height="10" viewBox="0 0 12 10"><g fill="#6b6b7b"><rect x="0" y="0.4" width="11.5" height="1.3" rx=".4"/><rect x="0" y="4.3" width="11.5" height="1.3" rx=".4"/><rect x="0" y="8.2" width="11.5" height="1.3" rx=".4"/></g></svg></span><span class="kw">らっこいぬ ぬいぐるみ</span><span class="vol">170</span><span class="spk"><svg class="sp" width="90" height="15" viewBox="0 0 90 15"><polygon points="0.9,14.15 0.9,10.4 8.9,10.4 16.9,11.4 25.0,8.5 33.0,10.4 41.0,9.6 49.0,9.6 57.0,8.3 65.0,7.0 73.1,7.0 81.1,8.5 89.1,10.4 89.1,14.15" fill="#d6ebfa"/><polyline points="0.9,10.4 8.9,10.4 16.9,11.4 25.0,8.5 33.0,10.4 41.0,9.6 49.0,9.6 57.0,8.3 65.0,7.0 73.1,7.0 81.1,8.5 89.1,10.4" fill="none" stroke="#3499e6" stroke-width="1.1" stroke-linejoin="round" stroke-linecap="round"/></svg></span><span class="cpc">0</span><span class="cmp">100</span></div>
 </div>
</div>
</body>
</html>
